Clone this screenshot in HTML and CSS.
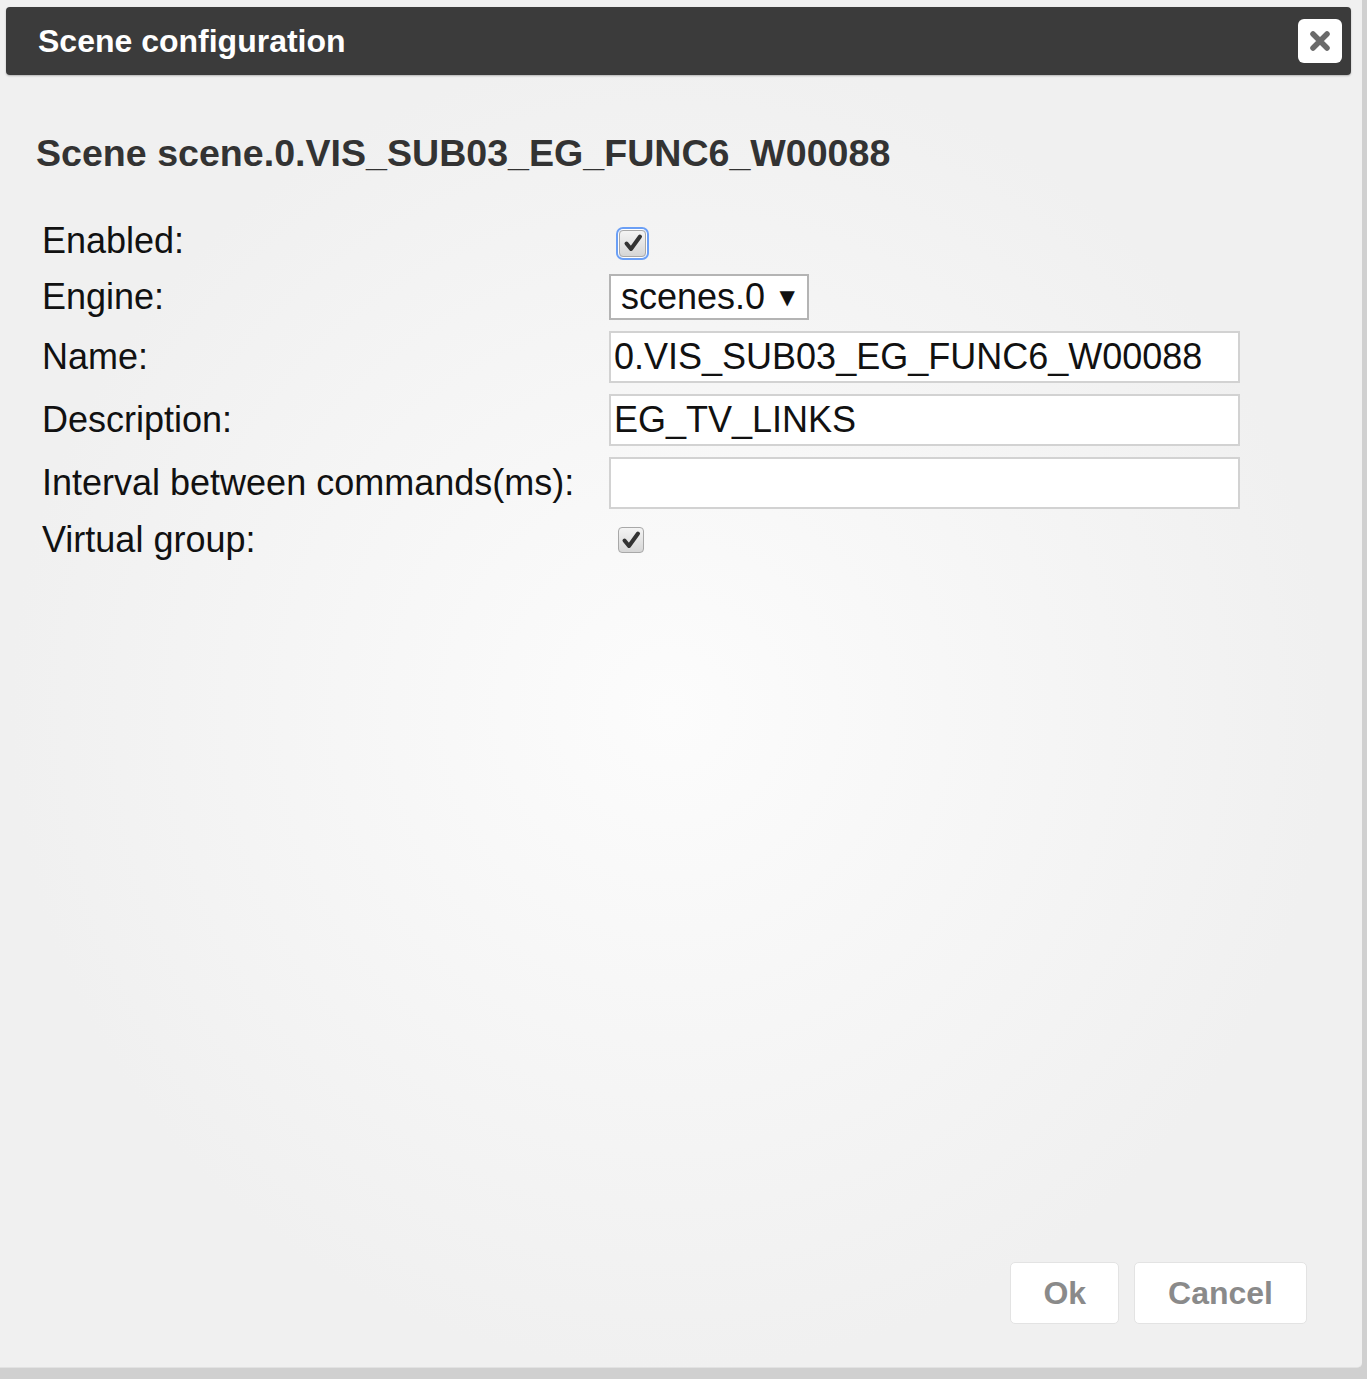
FILE: index.html
```html
<!DOCTYPE html>
<html lang="en">
<head>
  <meta charset="UTF-8" />
  <meta name="viewport" content="width=device-width, initial-scale=1.0"/>
  <title>Scene configuration</title>
  <link rel="stylesheet" href="styles.css">
</head>
<body>
  <div class="dialog">
    <div class="titlebar">
      <span class="title">Scene configuration</span>
      <button class="close-btn" title="Close">
        <svg width="22" height="22" viewBox="0 0 22 22">
          <path d="M4 4 L18 18 M18 4 L4 18" stroke="#6a6a6a" stroke-width="5.5" stroke-linecap="round"/>
        </svg>
      </button>
    </div>

    <div class="content">
      <h2 class="scene-name">Scene scene.0.VIS_SUB03_EG_FUNC6_W00088</h2>

      <div class="form-grid">
        <label class="field-label row-first">Enabled:</label>
        <div class="field row-first">
          <span class="checkbox focused">
            <svg width="24" height="24" viewBox="0 0 24 24">
              <path d="M5.5 12.5 L10 18 L19 5.5" fill="none" stroke="#333" stroke-width="4" stroke-linecap="round" stroke-linejoin="round"/>
            </svg>
          </span>
        </div>

        <label class="field-label">Engine:</label>
        <div class="field">
          <div class="select-box">
            <span>scenes.0</span>
            <span class="arrow">&#9660;</span>
          </div>
        </div>

        <label class="field-label">Name:</label>
        <div class="field">
          <input type="text" class="text-input" value="0.VIS_SUB03_EG_FUNC6_W00088" />
        </div>

        <label class="field-label">Description:</label>
        <div class="field">
          <input type="text" class="text-input" value="EG_TV_LINKS" />
        </div>

        <label class="field-label">Interval between commands(ms):</label>
        <div class="field">
          <input type="text" class="text-input" value="" />
        </div>

        <label class="field-label">Virtual group:</label>
        <div class="field">
          <span class="checkbox">
            <svg width="24" height="24" viewBox="0 0 24 24">
              <path d="M5.5 12.5 L10 18 L19 5.5" fill="none" stroke="#333" stroke-width="4" stroke-linecap="round" stroke-linejoin="round"/>
            </svg>
          </span>
        </div>
      </div>
    </div>

    <div class="button-pane">
      <button class="dlg-btn">Ok</button>
      <button class="dlg-btn">Cancel</button>
    </div>
  </div>
</body>
</html>
```

FILE: styles.css
```css
 body {
   margin: 0;
   background: #d0d0d0;
   font-family: 'Liberation Sans', Arial, sans-serif;
 }

 .dialog {
   width: 1362px;
   height: 1368px;
   box-sizing: border-box;
   display: flex;
   flex-direction: column;
   background: radial-gradient(circle at 670px 710px, #fcfcfc 0, #f0f0f0 660px);
   border-bottom-right-radius: 5px;
   border-bottom: 1px solid #e2e2e2;
 }

 .titlebar {
   margin: 7px 11px 0 6px;
   height: 68px;
   background: #3b3b3b;
   border-radius: 4px;
   display: flex;
   align-items: center;
   justify-content: space-between;
   padding: 0 9px 0 32px;
   box-shadow: 0 1px 2px rgba(0, 0, 0, 0.25);
 }

 .title {
   color: #fff;
   font-size: 32px;
   font-weight: bold;
   line-height: 68px;
 }

 .close-btn {
   width: 44px;
   height: 44px;
   background: #fff;
   border: none;
   border-radius: 6px;
   padding: 0;
   display: flex;
   align-items: center;
   justify-content: center;
   cursor: pointer;
 }

 .content {
   padding: 0 0 0 36px;
 }

 .scene-name {
   margin: 58px 0 0 0;
   font-size: 37.6px;
   line-height: 40px;
   font-weight: bold;
   color: #333;
 }

 .form-grid {
   margin: 48px 0 0 6px;
   display: grid;
   grid-template-columns: 567px 631px;
   row-gap: 11px;
   align-items: center;
 }

 .field-label {
   font-size: 36px;
   line-height: 40px;
   color: #111;
   white-space: nowrap;
 }

 .field {
   display: flex;
   align-items: center;
   min-height: 40px;
 }

 .row-first {
   min-height: 42px;
 }

 .field.row-first {
   padding-top: 2px;
   box-sizing: border-box;
 }

 .checkbox {
   width: 26px;
   height: 26px;
   box-sizing: border-box;
   margin-left: 9px;
   border: 1px solid #a8a8a8;
   border-radius: 4px;
   background: linear-gradient(#f4f4f4, #d6d6d6);
   display: flex;
   align-items: center;
   justify-content: center;
 }

 .checkbox.focused {
   width: 27px;
   height: 27px;
   margin-left: 10px;
   box-shadow: 0 0 0 1px #fff, 0 0 0 3px #6b9ff5;
 }

 .select-box {
   width: 200px;
   height: 46px;
   box-sizing: border-box;
   border: 2px solid #b4b4b4;
   background: #fff;
   display: flex;
   align-items: center;
   justify-content: space-between;
   padding: 0 12px 0 10px;
   font-size: 36px;
   color: #111;
 }

 .select-box .arrow {
   font-family: 'DejaVu Sans', sans-serif;
   font-size: 20px;
 }

 .text-input {
   width: 631px;
   height: 52px;
   box-sizing: border-box;
   border: 2px solid #d2d2d2;
   background: #fff;
   padding: 0 3px;
   font-family: 'Liberation Sans', Arial, sans-serif;
   font-size: 36px;
   color: #111;
   outline: none;
 }

 .button-pane {
   margin-top: auto;
   display: flex;
   justify-content: flex-end;
   gap: 15px;
   padding: 0 55px 43px 0;
 }

 .dlg-btn {
   height: 62px;
   padding: 0 33px;
   background: #fff;
   border: 1px solid #e3e3e3;
   border-radius: 5px;
   font-family: 'Liberation Sans', Arial, sans-serif;
   font-size: 32px;
   font-weight: bold;
   color: #8a8a8a;
   cursor: pointer;
 }

 .dlg-btn:first-child {
   padding: 0 32px;
 }
```
